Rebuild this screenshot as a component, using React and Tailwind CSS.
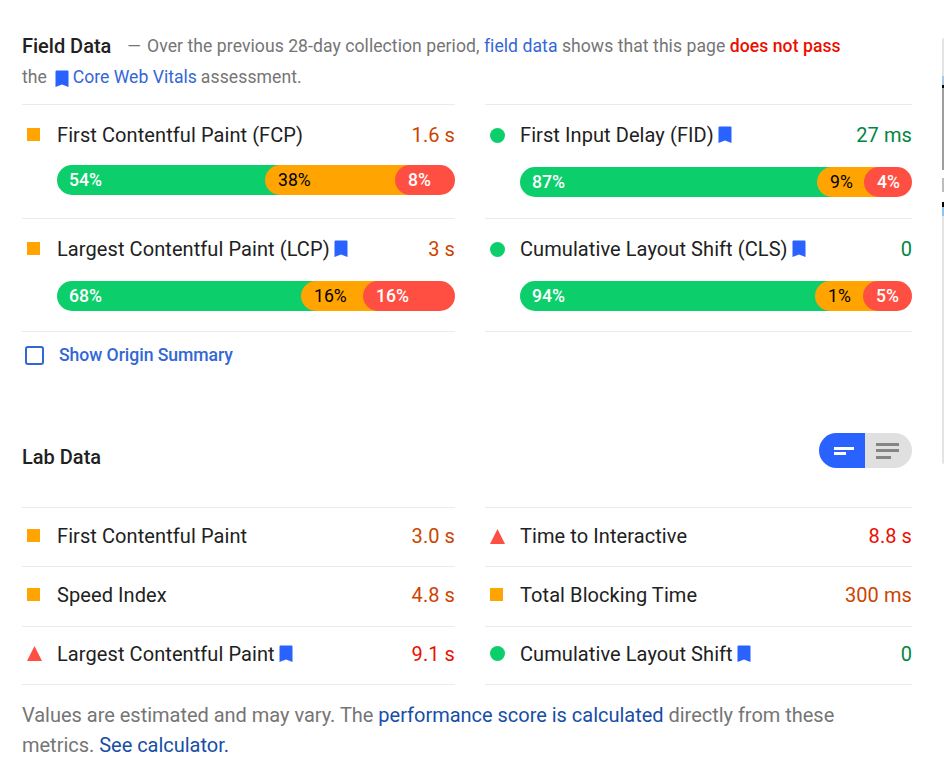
import React from "react";

const Bookmark = ({ className = "" }) => (
  <svg viewBox="0 0 14 18" className={`inline-block w-[14px] h-[18px] shrink-0 ${className}`}>
    <path d="M1.5 0.5H12.5A1 1 0 0 1 13.5 1.5V17L7 14.6L0.5 17V1.5A1 1 0 0 1 1.5 0.5Z" fill="#2962ff" />
  </svg>
);

const Square = () => <div className="w-[13px] h-[13px] bg-[#ffa400] ml-[5px] mr-[17px] shrink-0 -mt-[1px]" />;
const Circle = () => <div className="w-[15px] h-[15px] rounded-full bg-[#0cce6b] ml-[5px] mr-[15px] shrink-0" />;
const Triangle = () => (
  <svg viewBox="0 0 15 15" className="w-[15px] h-[15px] ml-[5px] mr-[15px] shrink-0">
    <path d="M7.5 0L15 15H0Z" fill="#ff4e42" />
  </svg>
);

const icons = { s: Square, c: Circle, t: Triangle };
const colors = { s: "text-[#cc4400]", c: "text-[#018642]", t: "text-[#eb0f00]" };

const Metric = ({ icon, label, mark, value }) => {
  const Icon = icons[icon];
  return (
    <div className="flex items-center text-[20px] leading-[24px] tracking-[0.08px]">
      <Icon />
      <span className="text-[#212121] flex-1 flex items-center gap-[4px]">
        {label}
        {mark && <Bookmark />}
      </span>
      <span className={colors[icon]}>{value}</span>
    </div>
  );
};

const Bar = ({ start, end, g, o, r, L, R }) => (
  <div className="flex h-[30px] ml-[35px] text-[17.6px] leading-[30px] font-medium">
    <div className="bg-[#0cce6b] text-white rounded-l-[15px] pl-[12px]" style={{ width: L - start + 15 }}>{g}</div>
    <div className="bg-[#ffa400] text-black font-normal pl-[13px] -ml-[15px] rounded-l-[15px]" style={{ width: R - L + 15 }}>{o}</div>
    <div className="bg-[#ff4e42] text-white rounded-[15px] pl-[13px] -ml-[15px]" style={{ width: end - R }}>{r}</div>
  </div>
);

const Field = ({ cls, gap, bar, ...m }) => (
  <div className={`border-t border-[#ebebeb] pt-[18px] ${cls}`}>
    <Metric {...m} />
    <div className={gap}>
      <Bar {...bar} />
    </div>
  </div>
);

const LabRow = ({ cls, ...m }) => (
  <div className={`border-t border-[#ebebeb] flex flex-col justify-center ${cls}`}>
    <Metric {...m} />
  </div>
);

export default function App() {
  return (
    <div
      className="relative w-[944px] h-[764px] bg-white overflow-hidden pl-[22px] pr-[32px] pt-[31px]"
      style={{ fontFamily: "Roboto, sans-serif" }}
    >
      <div className="text-[17.6px] leading-[31px] text-[#757575] h-[73px]">
        <div className="flex items-center whitespace-nowrap">
          <span className="text-[20px] font-medium text-[#212121] mr-[17px] -tracking-[0.01px]">Field Data</span>
          <span className="mr-[6px] -ml-[1px]">—</span>
          <span className="tracking-[0.05px]">Over the previous 28-day collection period, <span className="text-[#3367d6]">field data</span> shows that this page <span className="text-[#eb0f00] font-medium">does not pass</span></span>
        </div>
        <div className="flex items-center whitespace-nowrap">
          <span className="mr-[8px]">the</span>
          <Bookmark className="mr-[4px] mt-[2px]" />
          <span className="text-[#3367d6] mr-[4px]">Core Web Vitals</span>
          <span className="tracking-[0.08px]">assessment.</span>
        </div>
      </div>

      <div className="grid grid-cols-[433px_427px] gap-x-[30px]">
        <Field cls="h-[114px]" gap="mt-[18px]" icon="s" label="First Contentful Paint (FCP)" value="1.6 s" bar={{ start: 57, end: 455, g: "54%", o: "38%", r: "8%", L: 265, R: 395 }} />
        <Field cls="h-[114px]" gap="mt-[20px]" icon="c" label="First Input Delay (FID)" mark value="27 ms" bar={{ start: 520, end: 912, g: "87%", o: "9%", r: "4%", L: 817, R: 864 }} />
        <Field cls="h-[113px]" gap="mt-[20px]" icon="s" label="Largest Contentful Paint (LCP)" mark value="3 s" bar={{ start: 57, end: 455, g: "68%", o: "16%", r: "16%", L: 301, R: 363 }} />
        <Field cls="h-[113px]" gap="mt-[20px]" icon="c" label="Cumulative Layout Shift (CLS)" mark value="0" bar={{ start: 520, end: 912, g: "94%", o: "1%", r: "5%", L: 815, R: 863 }} />
        <div className="border-t border-[#ebebeb] h-[1px]" />
        <div className="border-t border-[#ebebeb] h-[1px]" />
      </div>

      <div className="flex items-center h-[46px] text-[#3367d6] text-[17.6px] font-medium">
        <div className="w-[19px] h-[19px] border-2 border-[#3367d6] rounded-[3px] ml-[3px] mr-[15px]" />
        <span className="-tracking-[0.05px]">Show Origin Summary</span>
      </div>

      <div className="flex items-center justify-between mt-[55px] h-[35px] mb-[39px]">
        <span className="text-[20px] font-medium text-[#212121] pt-[13px]">Lab Data</span>
        <div className="flex w-[93px] h-[35px] rounded-full overflow-hidden">
          <div className="w-[46px] bg-[#2962ff] flex flex-col justify-center gap-[2px] pl-[15px]">
            <div className="w-[20px] h-[3px] bg-white" />
            <div className="w-[12px] h-[3px] bg-white" />
          </div>
          <div className="flex-1 bg-[#e0e0e0] flex flex-col justify-center gap-[3.5px] pl-[11px]">
            <div className="w-[23px] h-[3px] bg-[#858585]" />
            <div className="w-[23px] h-[3px] bg-[#858585]" />
            <div className="w-[15px] h-[3px] bg-[#858585]" />
          </div>
        </div>
      </div>

      <div className="grid grid-cols-[433px_427px] gap-x-[30px]">
        <LabRow cls="h-[59px] pb-[2px]" icon="s" label="First Contentful Paint" value="3.0 s" />
        <LabRow cls="h-[59px] pb-[2px]" icon="t" label="Time to Interactive" value="8.8 s" />
        <LabRow cls="h-[60px] pb-[4px]" icon="s" label="Speed Index" value="4.8 s" />
        <LabRow cls="h-[60px] pb-[4px]" icon="s" label="Total Blocking Time" value="300 ms" />
        <LabRow cls="h-[58px] pb-[4px]" icon="t" label="Largest Contentful Paint" mark value="9.1 s" />
        <LabRow cls="h-[58px] pb-[4px]" icon="c" label="Cumulative Layout Shift" mark value="0" />
        <div className="border-t border-[#ebebeb] h-[1px]" />
        <div className="border-t border-[#ebebeb] h-[1px]" />
      </div>

      <p className="mt-[15px] text-[20px] leading-[30px] text-[#757575] -tracking-[0.02px] max-w-[860px]">
        Values are estimated and may vary. The <span className="text-[#174ea6]">performance score is calculated</span> directly from these metrics. <span className="text-[#174ea6]">See calculator.</span>
      </p>

      <div className="absolute right-0 top-[38px] w-[2px] h-[426px] flex flex-col bg-[#e4e4e4] rounded-l-[2px]">
        <div className="h-[38px]" />
        <div className="h-[9px] bg-[#a8c7ec]" />
        <div className="h-[3px] bg-black" />
        <div className="h-[82px] bg-[#9e9e9e]" />
        <div className="h-[8px] bg-white" />
        <div className="h-[14px] bg-[#bdbdbd]" />
        <div className="h-[10px] bg-white" />
        <div className="h-[5px] bg-black" />
        <div className="h-[9px] bg-[#90c4f0]" />
      </div>
    </div>
  );
}
